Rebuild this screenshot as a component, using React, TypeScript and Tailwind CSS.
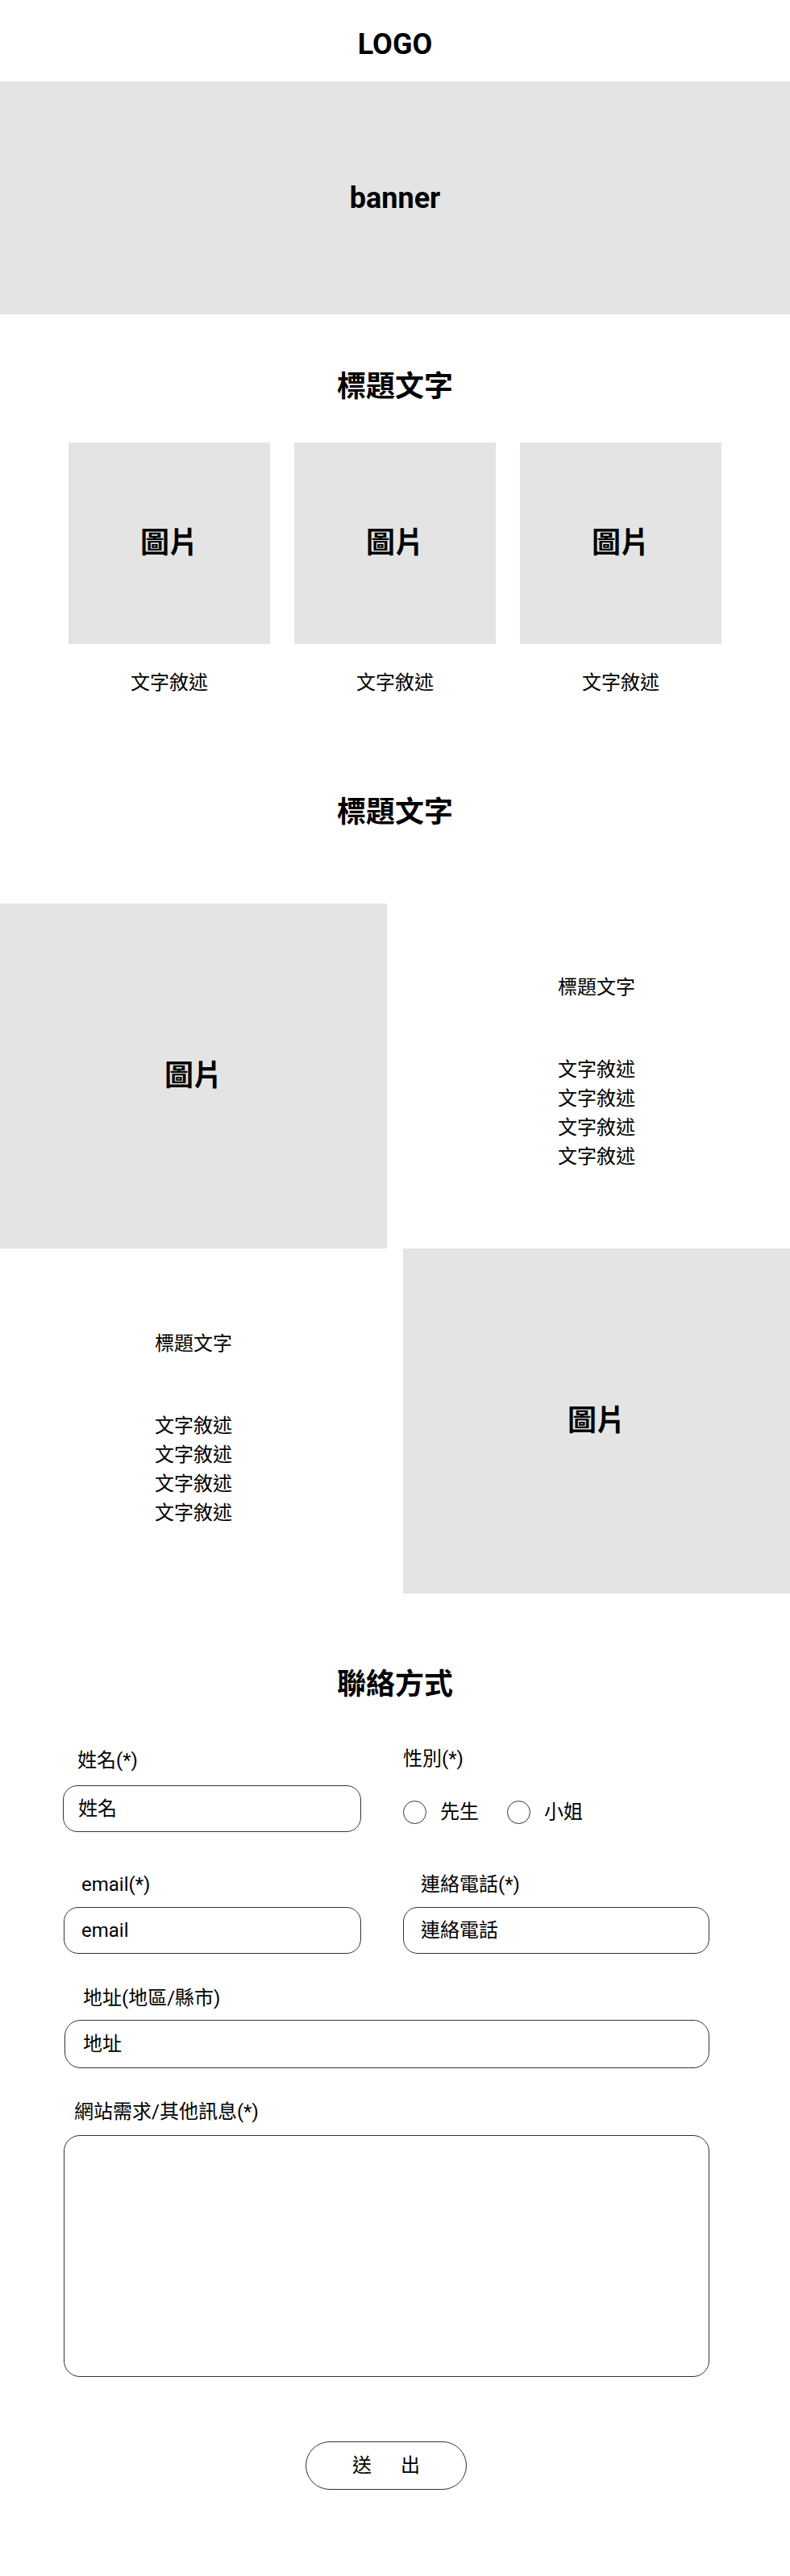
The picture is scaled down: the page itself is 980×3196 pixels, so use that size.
import React from "react";

const cards = ["圖片", "圖片", "圖片"];
const lines = ["文字敘述", "文字敘述", "文字敘述", "文字敘述"];

function TextBlock({ padTop }: { padTop: string }) {
  return (
    <div className={`w-[480px] flex flex-col items-center ${padTop}`}>
      <h3 className="text-[24px] leading-[36px] font-normal">標題文字</h3>
      <div className="mt-[66px] flex flex-col items-center">
        {lines.map((t, i) => (
          <p key={i} className="text-[24px] leading-[36px]">
            {t}
          </p>
        ))}
      </div>
    </div>
  );
}

function ImageBlock() {
  return (
    <div className="w-[480px] h-[428px] bg-[#e4e4e4] flex items-center justify-center">
      <span className="text-[36px] leading-[54px] font-bold">圖片</span>
    </div>
  );
}

function Radio({ label }: { label: string }) {
  return (
    <label className="flex items-center">
      <span className="w-[29px] h-[29px] rounded-full border border-[#333] bg-white" />
      <span className="ml-[17px] text-[24px] leading-[36px]">{label}</span>
    </label>
  );
}

const inputCls =
  "w-full border border-[#333] bg-white text-[24px] text-black placeholder:text-black outline-none";

export default function App() {
  return (
    <div className="w-[980px] min-h-[3196px] bg-white text-black font-['Roboto','Noto_Sans_CJK_TC',sans-serif]">
      {/* header */}
      <header className="pt-[28px] pb-[19px] flex justify-center">
        <h1 className="text-[36px] leading-[54px] font-bold">LOGO</h1>
      </header>

      {/* banner */}
      <section className="h-[289px] bg-[#e4e4e4] flex items-center justify-center">
        <span className="text-[36px] leading-[54px] font-bold">banner</span>
      </section>

      {/* three cards */}
      <section className="pt-[63px] flex flex-col items-center">
        <h2 className="text-[36px] leading-[54px] font-bold">標題文字</h2>
        <div className="mt-[42px] flex gap-[30px]">
          {cards.map((c, i) => (
            <div key={i} className="w-[250px] flex flex-col items-center">
              <div className="w-[250px] h-[250px] bg-[#e4e4e4] flex items-center justify-center">
                <span className="text-[36px] leading-[54px] font-bold">{c}</span>
              </div>
              <p className="mt-[30px] text-[24px] leading-[36px]">文字敘述</p>
            </div>
          ))}
        </div>
      </section>

      {/* alternating rows */}
      <section className="pt-[116px]">
        <h2 className="text-center text-[36px] leading-[54px] font-bold">標題文字</h2>
        <div className="mt-[86px] flex gap-[20px]">
          <ImageBlock />
          <TextBlock padTop="pt-[86px]" />
        </div>
        <div className="flex gap-[20px]">
          <TextBlock padTop="pt-[100px]" />
          <ImageBlock />
        </div>
      </section>

      {/* contact form */}
      <section className="pt-[86px] pb-[107px]">
        <h2 className="text-center text-[36px] leading-[54px] font-bold">聯絡方式</h2>
        <form className="ml-[78px] w-[802px] mt-[49px]">
          <div className="flex gap-[52px]">
            <div className="w-[370px]">
              <p className="pl-[18px] text-[24px] leading-[36px]">姓名(*)</p>
              <input
                className={`${inputCls} mt-[13px] h-[58px] rounded-[18px] pl-[18px]`}
                placeholder="姓名"
              />
            </div>
            <div className="w-[380px]">
              <p className="-mt-[2px] text-[24px] leading-[36px]">性別(*)</p>
              <div className="mt-[30px] flex items-center gap-[35px]">
                <Radio label="先生" />
                <Radio label="小姐" />
              </div>
            </div>
          </div>

          <div className="mt-[47px] flex gap-[52px]">
            <div className="w-[370px] pl-[1px]">
              <p className="pl-[22px] text-[24px] leading-[36px]">email(*)</p>
              <input
                className={`${inputCls} mt-[10px] h-[58px] rounded-[18px] pl-[21px]`}
                placeholder="email"
              />
            </div>
            <div className="w-[380px]">
              <p className="pl-[22px] text-[24px] leading-[36px]">連絡電話(*)</p>
              <input
                className={`${inputCls} mt-[10px] h-[58px] rounded-[18px] pl-[21px]`}
                placeholder="連絡電話"
              />
            </div>
          </div>

          <div className="mt-[37px] pl-[2px]">
            <p className="pl-[23px] text-[24px] leading-[36px]">地址(地區/縣市)</p>
            <input
              className={`${inputCls} mt-[9px] h-[60px] rounded-[20px] pl-[22px]`}
              placeholder="地址"
            />
          </div>

          <div className="mt-[36px] pl-[1px]">
            <p className="pl-[13px] text-[24px] leading-[36px]">網站需求/其他訊息(*)</p>
            <textarea className={`${inputCls} mt-[11px] h-[300px] rounded-[20px] resize-none p-[20px] block`} />
          </div>

          <div className="mt-[80px] flex justify-center">
            <button
              type="button"
              className="w-[200px] h-[60px] rounded-full border border-[#333] bg-white flex items-center justify-center gap-[36px] text-[24px] leading-[36px]"
            >
              <span>送</span>
              <span>出</span>
            </button>
          </div>
        </form>
      </section>
    </div>
  );
}
